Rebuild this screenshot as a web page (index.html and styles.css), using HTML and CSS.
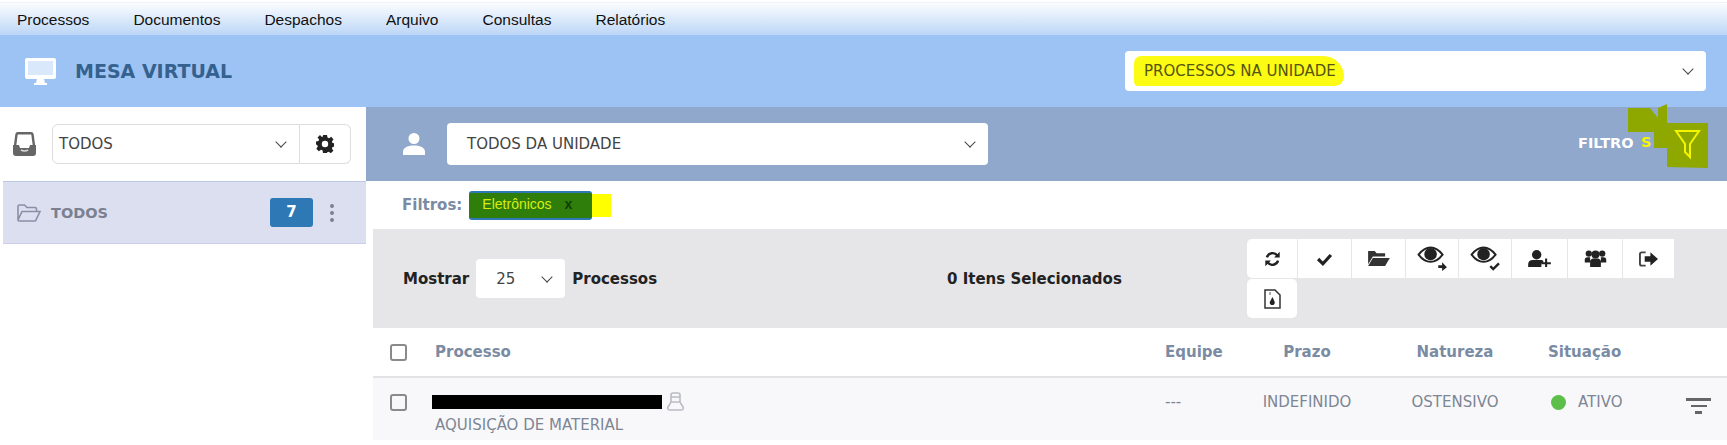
FILE: index.html
```html
<!doctype html>
<html>
<head>
<title>Mesa Virtual</title>
<meta charset="utf-8">
<link rel="stylesheet" href="styles.css">
</head>
<body>
	<nav class="menu">
		<a href="#">Processos</a>
		<a href="#">Documentos</a>
		<a href="#">Despachos</a>
		<a href="#">Arquivo</a>
		<a href="#">Consultas</a>
		<a href="#">Relatórios</a>
	</nav>

	<header class="top">
		<div class="brand">
			<svg class="icon-desktop" viewBox="0 0 31 27"><path fill="#fff" d="M2 0h27a2 2 0 0 1 2 2v17a2 2 0 0 1-2 2H19l1 4h2v2H9v-2h2l1-4H2a2 2 0 0 1-2-2V2a2 2 0 0 1 2-2z"/><rect x="3" y="3" width="25" height="14" fill="#d9e8fb"/></svg>
			<span>MESA VIRTUAL</span>
		</div>
		<div class="select select-view"><span class="marker">PROCESSOS NA UNIDADE</span></div>
	</header>

	<div class="content">
		<aside class="side">
			<div class="side-top">
				<svg class="icon-inbox" viewBox="0 0 25 24"><path fill="none" stroke="#666" stroke-width="2.4" d="M3 14 4.500 2.500a1.500 1.500 0 0 1 1.500-1.300h13a1.500 1.500 0 0 1 1.500 1.300L22 14"/><path fill="#666" d="M1 13h6l1 3h9l1-3h6v8a3 3 0 0 1-3 3H4a3 3 0 0 1-3-3z"/><path fill="none" stroke="#ddd" stroke-width="1.500" d="M9 18q3.500 2 7 0"/></svg>
				<div class="select select-box">TODOS</div>
				<button class="gear">
					<svg viewBox="0 0 18 18"><path fill="#222" fill-rule="evenodd" d="M7 0h4l.5 2.600 1.500.7 2.300-1.500 2.200 2.600-1.600 2 .6 1.600 2.500.5v3l-2.500.6-.6 1.500 1.500 2.200-2.600 2.400-2.100-1.500-1.500.6L11 18H7l-.5-2.700-1.500-.6-2.200 1.500L.3 13.700l1.500-2.200-.6-1.500L0 9.500v-3l2.500-.5.6-1.600L1.500 2.400 4 0l1.900 1.900 1-.4zM9 5.800a3.200 3.200 0 1 0 0 6.400 3.200 3.200 0 0 0 0-6.400z"/></svg>
				</button>
			</div>
			<div class="side-item">
				<svg class="icon-folder" viewBox="0 0 24 18"><path fill="none" stroke="#8a8fa5" stroke-width="1.600" d="M1 16V2.500A1.500 1.500 0 0 1 2.500 1h5L10 3.500h8A1.500 1.500 0 0 1 19.500 5v2.500M1 16l4-8.500h18L19 16a1 1 0 0 1-1 1H2a1 1 0 0 1-1-1z"/></svg>
				<span class="side-name">TODOS</span>
				<span class="badge">7</span>
				<span class="dots"><i></i><i></i><i></i></span>
			</div>
		</aside>

		<main class="main">
			<div class="bar">
				<svg class="icon-user" viewBox="0 0 22 22"><circle cx="11" cy="5.500" r="5.500" fill="#fff"/><path fill="#fff" d="M0 22v-3c0-4 4-6.500 11-6.500S22 15 22 19v3z"/></svg>
				<div class="select select-team">TODOS DA UNIDADE</div>
				<div class="filters-link">FILTRO<span class="yellow">S</span></div>
				<svg class="scribble" viewBox="0 0 80 64"><path fill="#8fa800" d="M0 4h22l8 10V4l9-4v19h41v45l-41-1V44H26V28H0z"/><path fill="none" stroke="#f5f500" stroke-width="2" d="M48 27h23L62 40v13l-5-5v-8z"/></svg>
				<span class="yellow filters-s">S</span>
			</div>

			<div class="active-filters">
				<span class="filters-label">Filtros:</span>
				<span class="tag">Eletrônicos <b>x</b></span><span class="tag-mark"></span>
			</div>

			<div class="inner">
				<div class="toolbar">
					<div class="show">
						<b>Mostrar</b>
						<div class="select select-size">25</div>
						<b>Processos</b>
					</div>
					<b class="selected-count">0 Itens Selecionados</b>
					<div class="tools">
						<button class="tool t50"><svg viewBox="0 0 20 20"><g fill="none" stroke="#222" stroke-width="3"><path d="M3 8a7.500 7.500 0 0 1 13-2.500"/><path d="M17 12a7.500 7.500 0 0 1-13 2.500"/></g><path fill="#222" d="M19 1v7h-7zM1 19v-7h7z"/></svg></button>
						<button class="tool t53"><svg viewBox="0 0 20 20"><path fill="none" stroke="#222" stroke-width="4" d="M2 10l6 6L18 5"/></svg></button>
						<button class="tool t53"><svg class="wide" viewBox="0 0 24 18"><path fill="#333" d="M1 1h7l2 2.500h9V7H6L1 15z"/><path fill="#333" d="M6 8.500h18L19 17H1z"/></svg></button>
						<button class="tool t52"><svg class="big" viewBox="0 0 32 26"><path fill="none" stroke="#222" stroke-width="2" d="M1.500 9C6 3 10 1.500 14 1.500S22 3 26.500 9C22 15 18 16.500 14 16.500S6 15 1.500 9z"/><circle cx="14" cy="8.500" r="6.500" fill="#222"/><path fill="#222" d="M22 20h4v-3l5 5-5 4v-3h-4z"/></svg></button>
						<button class="tool t52"><svg class="big" viewBox="0 0 32 26"><path fill="none" stroke="#222" stroke-width="2" d="M1.500 9C6 3 10 1.500 14 1.500S22 3 26.500 9C22 15 18 16.500 14 16.500S6 15 1.500 9z"/><circle cx="14" cy="8.500" r="6.500" fill="#222"/><path fill="none" stroke="#222" stroke-width="2.500" d="M21 21l3 3 6-6"/></svg></button>
						<button class="tool t55"><svg class="wide" viewBox="0 0 24 18"><circle cx="9" cy="5" r="5" fill="#222"/><path fill="#222" d="M0 18v-3c0-3 2-4.500 5-4.500h8c1.500 0 2.500.5 3 1V14h-2v4z"/><path fill="none" stroke="#222" stroke-width="2.200" d="M14 14h10M19 9v9"/></svg></button>
						<button class="tool t54"><svg class="wide" viewBox="0 0 24 19"><circle cx="4.500" cy="4" r="3.500" fill="#222"/><circle cx="19.500" cy="4" r="3.500" fill="#222"/><circle cx="12" cy="5" r="4.500" fill="#222"/><path fill="#222" d="M0 14V11c0-2 1-3 3-3h3v6zM24 14V11c0-2-1-3-3-3h-3v6zM6 19v-6c0-2 1.500-3.500 3.500-3.500h5c2 0 3.500 1.500 3.500 3.500v6z"/></svg></button>
						<button class="tool t51"><svg viewBox="0 0 20 16"><path fill="none" stroke="#444" stroke-width="2" d="M7 1H3a2 2 0 0 0-2 2v10a2 2 0 0 0 2 2h4"/><path fill="#222" d="M6 5h6V1l8 7-8 7v-4H6z"/></svg></button>
						<button class="tool t50 tool-file"><svg class="tall" viewBox="0 0 17 20"><path fill="#fff" stroke="#333" stroke-width="1.500" d="M1 1h10l5 5v13H1z"/><path fill="#222" d="M8.500 8l2 4.500a2.500 2.500 0 1 1-4.500 0z"/><path fill="#aaa" d="M5 3h2v3H5z"/></svg></button>
					</div>
				</div>

				<div class="row row-head">
					<span class="check"></span>
					<span>Processo</span>
					<span>Equipe</span>
					<span class="center">Prazo</span>
					<span class="center">Natureza</span>
					<span class="status-col">Situação</span>
				</div>

				<div class="row row-body">
					<span class="check check-body"></span>
					<div class="process">
						<div class="process-num">
							<span class="redacted"></span>
							<svg class="icon-stamp" viewBox="0 0 19 19"><path fill="none" stroke="#b9bcc4" stroke-width="1.600" d="M5 10V3a2 2 0 0 1 2-2h5a2 2 0 0 1 2 2v7M5 5h9M5 10h9l3 5a2 2 0 0 1-2 3H4a2 2 0 0 1-2-3z"/></svg>
						</div>
						<div class="process-name">AQUISIÇÃO DE MATERIAL</div>
					</div>
					<span class="cell-top">---</span>
					<span class="center cell-top">INDEFINIDO</span>
					<span class="center cell-top">OSTENSIVO</span>
					<span class="status-col cell-top status"><i class="dot"></i>ATIVO</span>
					<span class="lines"><i></i><i></i><i></i></span>
				</div>
			</div>
		</main>
	</div>
</body>
</html>
```

FILE: styles.css
```css
* {
	box-sizing: border-box;
}
html, body {
	height: 100%;
}
body {
	margin: 0;
	overflow: hidden;
	background: #fff;
	color: #222;
	font-family: "DejaVu Sans", sans-serif;
	font-size: 15px;
}
svg {
	display: block;
}

/* menu */
.menu {
	display: flex;
	gap: 44px;
	height: 33px;
	margin-top: 2px;
	padding: 3px 0 0 17px;
	border-top: 1px solid #eef4fc;
	background: linear-gradient(#fbfdff, #bcd6f6);
	margin-left: 0;
}
.menu a {
	color: #111;
	font: 15.500px/27px "Liberation Sans", sans-serif;
	text-decoration: none;
}

/* header */
.top {
	display: flex;
	justify-content: space-between;
	align-items: center;
	height: 72px;
	padding: 0 21px 0 25px;
	background: #9cc3f3;
}
.brand {
	display: flex;
	align-items: center;
	gap: 19px;
	color: #35618f;
	font-size: 19px;
	font-weight: bold;
}
.icon-desktop {
	width: 31px;
	height: 27px;
}

/* fake selects */
.select {
	position: relative;
	display: flex;
	align-items: center;
	background: #fff;
	border-radius: 4px;
	color: #444;
	font-size: 15px;
}
.select::after {
	content: '';
	position: absolute;
	right: 14px;
	top: 50%;
	width: 7px;
	height: 7px;
	margin-top: -6px;
	border-right: 1.500px solid #444;
	border-bottom: 1.500px solid #444;
	transform: rotate(45deg);
}
.select-view {
	width: 581px;
	height: 40px;
	padding-left: 9px;
}
.marker {
	padding: 6px 8px 6px 10px;
	background: #fbfb14;
	border-radius: 14px 40px 18px 8px;
	color: #555410;
}
.select-box {
	width: 248px;
	height: 40px;
	padding-left: 6px;
	border: 1px solid #ddd;
	border-radius: 6px 0 0 6px;
}
.select-team {
	width: 541px;
	height: 42px;
	margin-left: 22px;
	padding-left: 20px;
}
.select-size {
	width: 89px;
	height: 39px;
	padding-left: 20px;
}

/* layout */
.content {
	display: flex;
	margin-left: 3px;
	height: 338px;
}
.side {
	width: 363px;
	flex: none;
}
.main {
	flex: 1;
	min-width: 0;
}

/* sidebar */
.side-top {
	display: flex;
	align-items: center;
	height: 74px;
	padding-left: 9px;
}
.icon-inbox {
	width: 25px;
	height: 24px;
	margin-right: 15px;
}
.gear {
	display: flex;
	align-items: center;
	justify-content: center;
	width: 51px;
	height: 40px;
	padding: 0;
	border: 1px solid #ddd;
	border-left: 0;
	border-radius: 0 6px 6px 0;
	background: #fff;
}
.gear svg {
	width: 18px;
	height: 18px;
}
.side-item {
	display: flex;
	align-items: center;
	height: 63px;
	padding-left: 14px;
	background: #dcdff0;
	border-top: 1px solid #bcc9e2;
	border-bottom: 1px solid #cfcdec;
}
.icon-folder {
	width: 24px;
	height: 18px;
	margin-right: 10px;
}
.side-name {
	width: 219px;
	color: #7a8090;
	font-size: 14.500px;
	font-weight: bold;
}
.badge {
	width: 43px;
	height: 29px;
	border-radius: 3px;
	background: #2d78b5;
	color: #fff;
	font-size: 15px;
	font-weight: bold;
	line-height: 29px;
	text-align: center;
}
.dots {
	display: flex;
	flex-direction: column;
	gap: 3px;
	margin-left: 17px;
}
.dots i {
	width: 4px;
	height: 4px;
	border-radius: 50%;
	background: #7d8090;
}

/* bar over the table */
.bar {
	position: relative;
	display: flex;
	align-items: center;
	height: 74px;
	padding-left: 37px;
	background: #8fa8cc;
}
.icon-user {
	width: 22px;
	height: 22px;
}
.filters-link {
	margin-left: 590px;
	color: #fff;
	font-size: 14.500px;
	font-weight: bold;
	margin-top: -2px;
}
.filters-link .yellow {
	visibility: hidden;
}
.scribble {
	position: absolute;
	left: 1262px;
	top: -3px;
	width: 80px;
	height: 64px;
}
.filters-s {
	position: absolute;
	left: 1275px;
	top: 27px;
	color: #f5f500;
	font-size: 14.500px;
	font-weight: bold;
}

/* active filters */
.active-filters {
	display: flex;
	align-items: center;
	height: 48px;
	padding: 0 0 0 36px;
}
.filters-label {
	margin-right: 7px;
	color: #7a8ba3;
	font-size: 15px;
	font-weight: bold;
}
.tag {
	width: 123px;
	height: 29px;
	padding-left: 13px;
	border-top: 2px solid #2d78b5;
	border-bottom: 2px solid #2d78b5;
	border-radius: 3px;
	background: #2f7d0a;
	color: #d6ee10;
	font: 14px/22px "Liberation Sans", sans-serif;
}
.tag b {
	margin-left: 9px;
	color: #0f3d05;
}
.tag-mark {
	width: 19px;
	height: 23px;
	background: #ffff00;
}

/* toolbar and table */
.inner {
	margin-left: 7px;
}
.toolbar {
	display: grid;
	grid-template-columns: 544px 300px 1fr;
	align-items: center;
	height: 99px;
	padding-left: 30px;
	background: #e6e6e8;
	color: #222;
}
.show {
	display: flex;
	align-items: center;
	gap: 7px;
}
.tools {
	display: flex;
	flex-wrap: wrap;
	gap: 1px 1px;
	width: 432px;
}
.tool {
	display: flex;
	align-items: center;
	justify-content: center;
	height: 39px;
	padding: 0;
	border: 0;
	background: #fff;
}
.tool svg {
	width: 19px;
	height: 16px;
}
.tool svg.wide {
	width: 23px;
	height: 17px;
}
.tool svg.big {
	width: 31px;
	height: 25px;
}
.tool svg.tall {
	width: 17px;
	height: 20px;
}
.t50 { width: 50px; border-radius: 5px 0 0 5px; }
.t51 { width: 51px; }
.t52 { width: 52px; }
.t53 { width: 53px; }
.t54 { width: 54px; }
.t55 { width: 55px; }
.tool-file {
	border-radius: 5px;
}

.row {
	display: grid;
	grid-template-columns: 62px 730px 80px 124px 172px 139px 1fr;
	color: #7d8694;
}
.row-head {
	align-items: center;
	height: 50px;
	border-bottom: 2px solid #e2e2e4;
	color: #7a8ba3;
	font-weight: bold;
}
.row-body {
	height: 62px;
	background: #f8f8fa;
}
.center {
	text-align: center;
}
.status-col {
	padding-left: 7px;
}
.check {
	width: 17px;
	height: 17px;
	margin-left: 17px;
	border: 2px solid #8a8a8a;
	border-radius: 3px;
}
.check-body {
	margin-top: 16px;
}
.process-num {
	display: flex;
	align-items: center;
	gap: 4px;
	height: 33px;
	padding-top: 14px;
	margin-left: -3px;
}
.redacted {
	width: 230px;
	height: 14px;
	background: #000;
}
.icon-stamp {
	width: 19px;
	height: 19px;
}
.process-name {
	margin-top: 5px;
}
.cell-top {
	margin-top: 15px;
}
.status {
	display: flex;
	align-items: flex-start;
}
.dot {
	width: 15px;
	height: 15px;
	margin: 2px 12px 0 3px;
	border-radius: 50%;
	background: #5cbf4a;
}
.lines {
	display: flex;
	flex-direction: column;
	align-items: center;
	gap: 4px;
	width: 25px;
	margin: 20px 0 0 6px;
}
.lines i {
	height: 2.500px;
	background: #666;
}
.lines i:nth-child(1) { width: 25px; }
.lines i:nth-child(2) { width: 16px; }
.lines i:nth-child(3) { width: 7px; }
```
